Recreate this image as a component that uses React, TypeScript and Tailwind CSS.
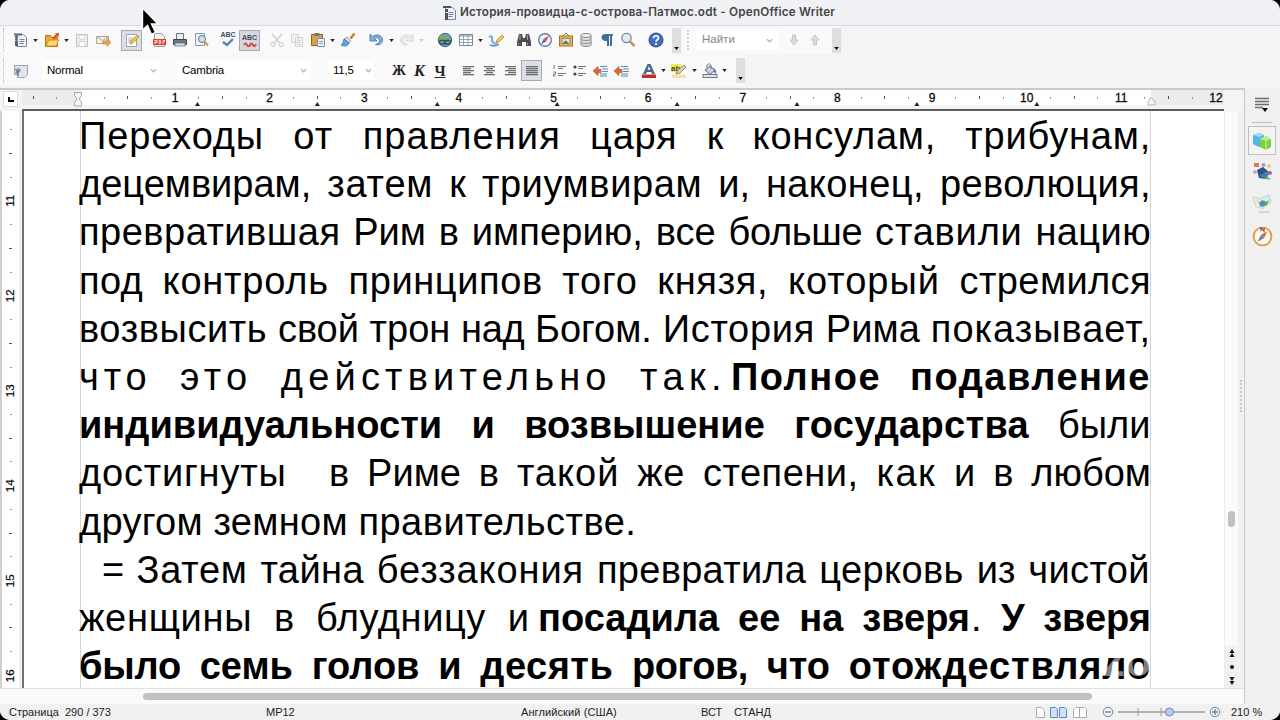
import type { ReactNode } from 'react';

// spacing: letter spacing of each word in px
type Part = { text: string; spacing: number[]; bold?: boolean; className?: string };

const LINES: Part[][] = [
  [{ text: 'Переходы от правления царя к консулам, трибунам,', spacing: [0.85, 1.2, 1.1, 0.8, 0, 0.8, 0.8] }],
  [{ text: 'децемвирам, затем к триумвирам и, наконец, революция,', spacing: [0, 0.8, 0, 0.6, 0, 0.4, 0.4] }],
  [{ text: 'превратившая Рим в империю, все больше ставили нацию', spacing: [0.5, 0, 0, 0.1, 0, -0.3, 0.8, 0.4] }],
  [{ text: 'под контроль принципов того князя, который стремился', spacing: [0.3, 0.8, 0.6, 0.8, 0.7, 1, 0.4] }],
  [{ text: 'возвысить свой трон над Богом. История Рима показывает,', spacing: [0.6, -0.1, 0, -0.4, 0, 0.7, 0.1, 1] }],
  [
    { text: 'что это действительно так.', spacing: [4.9, 5.2, 5.2, 5.4], className: 'w-[648px]' },
    { text: 'Полное подавление', spacing: [1.5, 1.5], bold: true, className: 'w-[420px]' },
  ],
  [
    { text: 'индивидуальности и возвышение государства', spacing: [0, 0, 0, 0.3], bold: true, className: 'w-[950px]' },
    { text: 'были', spacing: [0], className: 'w-[93px]' },
  ],
  [
    { text: 'достигнуты', spacing: [0.8], className: 'w-[207px]' },
    { text: 'в Риме в такой же степени, как и в любом', spacing: [0, 0, 0, 1, 0.6, 0.5, 1.5, 0, 0, 0], className: 'w-[822px]' },
  ],
  [{ text: 'другом земном правительстве.', spacing: [0.3, 0.3, 0.5], className: 'w-[556px]' }],
  [{ text: '= Затем тайна беззакония превратила церковь из чистой', spacing: [-0.5, 0.7, 0.4, 0.9, 0.3, 0.4, 0, 0.4], className: 'ml-[23px] w-[1048px]' }],
  [
    { text: 'женщины в блудницу и', spacing: [0.7, 0, 0.6, 0], className: 'w-[450px]' },
    { text: 'посадила ее на зверя', spacing: [0, 0, 0, 0], bold: true, className: 'ml-[9px] w-[432px]' },
    { text: '.', spacing: [0], className: 'ml-px w-[11px]' },
    { text: 'У зверя', spacing: [0, 0], bold: true, className: 'ml-auto w-[150px]' },
  ],
  [{ text: 'было семь голов и десять рогов, что отождествляло', spacing: [-0.2, 0, 0, 0, 0.5, -0.5, 0, 0.9], bold: true }],
];

function Icon({ children, className = '' }: { children: ReactNode; className?: string }) {
  return (
    <svg viewBox="0 0 16 16" className={`h-4 w-4 shrink-0 ${className}`} fill="none">
      {children}
    </svg>
  );
}

function Drop({ className = '' }: { className?: string }) {
  return (
    <svg viewBox="0 0 6 4" className={`h-[3px] w-[5px] shrink-0 ${className}`}>
      <path d="M0 0h6L3 4z" fill="#222" />
    </svg>
  );
}

function Chevron() {
  return (
    <svg viewBox="0 0 8 5" className="h-[5px] w-[7px]" fill="none">
      <path d="M1 1l3 3 3-3" stroke="#b5b5b5" strokeWidth="1.5" />
    </svg>
  );
}

function Overflow({ className = '' }: { className?: string }) {
  return (
    <div className={`flex h-[25px] w-[9px] shrink-0 items-end justify-center bg-[#dedede] pb-[3px] ${className}`}>
      <svg viewBox="0 0 6 4" className="h-[3px] w-[5px]"><path d="M0 0h6L3 4z" fill="#000" /></svg>
    </div>
  );
}

function Align({ rows }: { rows: [number, number][] }) {
  return (
    <Icon>
      {rows.map(([x, w], i) => (
        <rect key={i} x={x} y={3 + i * 2} width={w} height="1.3" fill="#6e6e6e" />
      ))}
    </Icon>
  );
}

function Page() {
  return (
    <g>
      <path d="M3.5 2.5h7l3 3v9h-10z" fill="#eef2f7" stroke="#7a8999" />
      <path d="M6.500 7.500h5M6.500 9.500h5M6.500 11.500h4" stroke="#6f87a3" />
    </g>
  );
}

function MainBar() {
  return (
    <div className="flex h-[28px] items-center">
      <div className="flex h-[28px] w-[681px] items-center rounded-sm bg-[#f9f9f9]">
        <div className="ml-[3px] h-6 w-[2px] border-l border-dotted border-[#b5b5b5]" />
        <Icon className="ml-[8px]">
          <Page />
          <path d="M1 1.500h8v2H1zM2 4h3v2H2zM2 6.500h3v2H2zM2 9h3v5H2z" fill="#55677b" />
        </Icon>
        <Drop className="ml-[4px]" />
        <Icon className="ml-[6px]">
          <path d="M1.500 3.500h5l1 2h6v9h-12z" fill="#f0a73a" stroke="#b8741c" />
          <path d="M2 14l3-6h10l-3 6z" fill="#ffd66b" stroke="#c58a25" strokeWidth=".8" />
          <path d="M8 6l4-4-1-1h4v4l-1-1-4 4z" fill="#e4572b" />
        </Icon>
        <Drop className="ml-[4px]" />
        <Icon className="ml-[5px]">
          <path d="M2.500 2.500h11v12h-11z" fill="#eee" stroke="#c2c2c2" />
          <path d="M5 3h6v4H5zM5 9.500h6v5H5z" fill="#fff" stroke="#cfcfcf" />
        </Icon>
        <Icon className="ml-[5px]">
          <path d="M1.500 4.500h12v7h-12z" fill="#f4f1e8" stroke="#a9a398" />
          <path d="M1.500 4.500l6 4 6-4" stroke="#a9a398" />
          <path d="M8 9h4V6.500l4 4-4 4V12H8z" fill="#e9a45a" stroke="#b77834" strokeWidth=".6" />
        </Icon>
        <div className="ml-[10px] flex h-[21px] w-[21px] items-center justify-center border border-[#a6a9b3] bg-[#dcdee6]">
          <Icon>
            <path d="M2.500 2.500h10v12h-10z" fill="#fff" stroke="#9ba7b5" />
            <path d="M4 6h5M4 8h4M4 10h3" stroke="#a5b2c4" />
            <path d="M6 12l1-3 6-6 2 2-6 6z" fill="#f4c63f" stroke="#a87b22" strokeWidth=".7" />
          </Icon>
        </div>
        <Icon className="ml-[9px]">
          <path d="M3.500 1.500h7l3 3v10h-10z" fill="#f6f6f6" stroke="#9a9a9a" />
          <path d="M2 7h13v6H2z" fill="#df4036" />
          <path d="M4 12V8.500h2v2H4M8 8.500v3h1.500v-3zM12 12V8.500h2M12 10h1.500" stroke="#fff" strokeWidth=".8" />
        </Icon>
        <Icon className="ml-[5px]">
          <path d="M4.500 1.500h7v6h-7z" fill="#e8f0f8" stroke="#65758a" />
          <path d="M1.500 7.500h13v5h-13z" fill="#6e7883" stroke="#3f4852" />
          <path d="M3 11h10v3H3z" fill="#d9dde2" stroke="#59636e" strokeWidth=".7" />
        </Icon>
        <Icon className="ml-[5px]">
          <path d="M2.500 1.500h9v12h-9z" fill="#eef3f8" stroke="#8a98a8" />
          <circle cx="9" cy="7" r="3.500" fill="#cfe4f5" stroke="#6b7580" />
          <path d="M11.500 9.500l3.500 4" stroke="#c99b4b" strokeWidth="2" />
        </Icon>
        <div className="ml-[11px] flex h-[18px] w-4 flex-col items-center">
          <span className="text-[7px] leading-[7px] font-bold text-[#3f4d5e]">ABC</span>
          <svg viewBox="0 0 12 9" className="h-[9px] w-3"><path d="M1 4l4 3 6-6" fill="none" stroke="#4a80c4" strokeWidth="2.400" /></svg>
        </div>
        <div className="ml-[3px] flex h-[21px] w-[21px] flex-col items-center border border-[#a6a9b3] bg-[#d5d7df] pt-[3px]">
          <span className="text-[7px] leading-[7px] font-bold text-[#3f4d5e]">ABC</span>
          <svg viewBox="0 0 14 5" className="mt-px h-[5px] w-[14px]"><path d="M1 3q1.500-3 3 0t3 0 3 0 3-1" fill="none" stroke="#d6473a" strokeWidth="1.800" /></svg>
        </div>
        <Icon className="ml-[9px]">
          <path d="M3 2l8 9M13 2l-8 9" stroke="#cfcfcf" strokeWidth="1.600" />
          <circle cx="4" cy="12.500" r="2" stroke="#d5d5d5" strokeWidth="1.300" />
          <circle cx="12" cy="12.500" r="2" stroke="#d5d5d5" strokeWidth="1.300" />
        </Icon>
        <Icon className="ml-[4px]">
          <path d="M2.500 2.500h7v8h-7zM6.500 5.500h7v9h-7z" fill="#f2f2f2" stroke="#d2d2d2" />
          <path d="M8 8.500h4M8 10.500h4M8 12.500h4" stroke="#d8d8d8" />
        </Icon>
        <Icon className="ml-[5px]">
          <path d="M1.500 2.500h11v11h-11z" fill="#d9a440" stroke="#8c6522" />
          <path d="M4.500 1h5v3h-5z" fill="#77777a" />
          <path d="M7.500 6.500h7v8h-7z" fill="#e6eef7" stroke="#7e91a8" />
          <path d="M9 9.500h4M9 11.500h4" stroke="#8fa4bd" />
        </Icon>
        <Drop className="ml-[4px]" />
        <Icon className="ml-[5px]">
          <path d="M14.500 1.500l-4 5" stroke="#b98346" strokeWidth="2.400" />
          <path d="M7 5l4 4-2 2-5-4z" fill="#d6dee8" stroke="#7185a0" strokeWidth=".7" />
          <path d="M4 7l5 4c-1 3-4 4-8 2 2-1 2-3 3-6z" fill="#6ba4dc" stroke="#3a6ea8" strokeWidth=".8" />
        </Icon>
        <Icon className="ml-[12px]">
          <path d="M2 2v7h7L6.500 6.500C9 5 12 6 11.500 9c-.3 2-2 3-4 3.500 4 1 7-1 7-4.500C14.500 3 8 1.500 4.500 4.500z" fill="#7fb0de" stroke="#3e6fa6" strokeWidth=".8" />
        </Icon>
        <Drop className="ml-[5px]" />
        <Icon className="ml-[5px]">
          <path d="M14 2v7H7l2.500-2.500C7 5 4 6 4.500 9c.3 2 2 3 4 3.500-4 1-7-1-7-4.500C1.500 3 8 1.500 11.500 4.500z" fill="#eaeaea" stroke="#d3d3d3" strokeWidth=".8" />
        </Icon>
        <Drop className="ml-[4px] opacity-20" />
        <Icon className="ml-[13px]">
          <circle cx="8" cy="8" r="6.700" fill="#6d9dc8" stroke="#49657e" />
          <path d="M3 4q4-3 5 0t4 0q2 3 1 5H3q-2-2 0-5z" fill="#77ad52" />
          <rect x="2.500" y="8.500" width="6" height="3.500" rx="1.700" stroke="#3b4b57" strokeWidth="1.300" />
          <rect x="7.500" y="8.500" width="6" height="3.500" rx="1.700" stroke="#3b4b57" strokeWidth="1.300" />
        </Icon>
        <Icon className="ml-[5px]">
          <path d="M1.500 2.500h13v11h-13z" fill="#fff" stroke="#7c8896" />
          <path d="M2 3h12v2H2z" fill="#b6c3d2" />
          <path d="M5.500 3v10M10 3v10M2 7.500h12M2 10.500h12" stroke="#97a5b5" />
        </Icon>
        <Drop className="ml-[4px]" />
        <Icon className="ml-[5px]">
          <path d="M1 5q4-2 3 2t5 5" stroke="#77a9de" strokeWidth="2" />
          <path d="M2 13q6 2 9-1" stroke="#5b8ec5" strokeWidth="1.500" />
          <path d="M8 11l1-3 5-5 2 2-5 5z" fill="#f2cb55" stroke="#a6792d" strokeWidth=".7" />
        </Icon>
        <Icon className="ml-[12px]">
          <path d="M3 2h3l1 4h2l1-4h3l2 8v4h-5v-4H6v4H1v-4z" fill="#4a4d52" />
          <path d="M4 3v5M11.500 3v5M2.500 11v2M11.500 11v2" stroke="#9b9fa6" />
        </Icon>
        <Icon className="ml-[5px]">
          <circle cx="8" cy="8" r="6.300" fill="#f2f6fb" stroke="#6b7f9c" strokeWidth="1.400" />
          <path d="M12 3.500L9.300 9.300 6.700 6.700z" fill="#d84a3a" />
          <path d="M4 12.500l2.700-5.800 2.600 2.600z" fill="#3f6fb8" />
        </Icon>
        <Icon className="ml-[5px]">
          <path d="M5 4l3-3 3 3" stroke="#8d6d39" />
          <rect x="1.500" y="4" width="13" height="10" fill="#e8b052" stroke="#a8731f" />
          <rect x="4" y="6.500" width="8" height="5" fill="#cfe3ee" stroke="#8b6a36" strokeWidth=".6" />
          <path d="M4.500 11.500l3-3 4 3z" fill="#4b7c5c" />
        </Icon>
        <Icon className="ml-[4px]">
          <path d="M3 3.500v9c0 2.500 10 2.500 10 0v-9" fill="#dcdcdc" stroke="#828282" />
          <ellipse cx="8" cy="3.500" rx="5" ry="2" fill="#f4f4f4" stroke="#828282" />
          <path d="M3 7c0 2 10 2 10 0M3 10c0 2 10 2 10 0" stroke="#8f8f8f" />
        </Icon>
        <Icon className="ml-[5px]">
          <path d="M6.500 2H14v1.800h-1V14h-2V3.800h-1V14H8V9C1 9.500 1 2 6.500 2z" fill="#456c9a" />
        </Icon>
        <Icon className="ml-[5px]">
          <circle cx="6.500" cy="6" r="4.600" fill="#dcecf8" stroke="#7a828c" strokeWidth="1.300" />
          <path d="M10 9.500l4.500 4.500" stroke="#b9903f" strokeWidth="2.400" />
        </Icon>
        <Icon className="ml-[12px]">
          <circle cx="8" cy="8" r="7" fill="#3f6bc0" stroke="#2b4c93" />
          <path d="M5.500 6.300c0-3.300 5-3.300 5-.4 0 1.800-2.500 1.900-2.500 3.800M8 11v1.900" stroke="#fff" strokeWidth="1.700" />
        </Icon>
        <Overflow className="ml-auto" />
      </div>
      <div className="flex h-[28px] w-[160px] items-center rounded-sm bg-[#f9f9f9] pl-[6px]">
        <div className="h-5 w-[2px] border-l-2 border-dotted border-[#d0d0d0]" />
        <div className="ml-[7px] flex h-[20px] w-[83px] items-center justify-between bg-white px-[6px]">
          <span className="text-[11.5px] text-[#858585]">Найти</span>
          <Chevron />
        </div>
        <Icon className="ml-[7px]">
          <path d="M6.500 3h3v5H12l-4 5-4-5h2.500z" fill="#dcdcdc" stroke="#c6c6c6" />
        </Icon>
        <Icon className="ml-[5px]">
          <path d="M6.500 13h3V8H12L8 3 4 8h2.500z" fill="#dcdcdc" stroke="#c6c6c6" />
        </Icon>
        <Overflow className="ml-auto" />
      </div>
    </div>
  );
}

function FormatBar() {
  return (
    <div className="mt-px mb-[2px] flex h-[31px] w-[745px] items-center bg-[#f9f9f9]">
      <div className="ml-[3px] h-6 w-[2px] border-l border-dotted border-[#b5b5b5]" />
      <Icon className="ml-[8px]">
        <path d="M1.500 2.500h13v9l-3 3h-7v-3h-3z" fill="#dfe5ec" stroke="#9aa5b2" />
        <path d="M2.500 10h2M5 5v8M2.500 6l2.500 4 2.500-4" stroke="#5d6f82" strokeWidth="1.200" />
      </Icon>
      <div className="ml-[13px] flex h-[19px] w-[118px] items-center justify-between bg-white pr-[3px] pl-[5px]">
        <span className="text-[11.5px] tracking-[-0.2px]">Normal</span>
        <Chevron />
      </div>
      <div className="ml-[17px] flex h-[19px] w-[134px] items-center justify-between bg-white pr-[4px] pl-[5px]">
        <span className="text-[11.5px] tracking-[-0.2px]">Cambria</span>
        <Chevron />
      </div>
      <div className="ml-[17px] flex h-[19px] w-[46px] items-center justify-between bg-white pr-[2px] pl-[5px]">
        <span className="text-[11.5px] tracking-[-0.2px]">11,5</span>
        <Chevron />
      </div>
      <div className="ml-[15px] flex font-['Liberation_Serif'] text-[16px] leading-4 font-bold text-[#222]">
        <span className="w-[20px] text-center text-[14px]">Ж</span>
        <span className="w-[21px] text-center italic">К</span>
        <span className="w-[20px] text-center text-[15px] underline">Ч</span>
      </div>
      <div className="ml-[11px] flex gap-[5px]">
        <Align rows={[[2, 11], [2, 8], [2, 11], [2, 8], [2, 11]]} />
        <Align rows={[[2, 11], [4, 7], [2, 11], [4, 7], [2, 11]]} />
        <Align rows={[[2, 11], [5, 8], [2, 11], [5, 8], [2, 11]]} />
      </div>
      <div className="ml-[2px] flex h-[21px] w-[21px] items-center justify-center border border-[#a6a9b3] bg-[#dcdee6]">
        <Align rows={[[2, 12], [2, 12], [2, 12], [2, 12], [2, 12]]} />
      </div>
      <Icon className="ml-[10px]">
        <path d="M2 2v4M1.500 9h2v2h-2v2h2" stroke="#777" />
        <path d="M6 3.500h8M6 5.500h5M6 10.500h8M6 12.500h5" stroke="#777" />
      </Icon>
      <Icon className="ml-[4px]">
        <circle cx="3" cy="4" r="1.600" fill="#444" />
        <circle cx="3" cy="11" r="1.600" fill="#444" />
        <path d="M6 3.500h8M6 5.500h5M6 10.500h8M6 12.500h5" stroke="#777" />
      </Icon>
      {[0, 1].map(i => (
        <Icon key={i} className="ml-[5px]">
          <path d="M0 8l5-4.500v3h3v3H5v3z" fill="#e2683a" stroke="#a5452a" strokeWidth=".6" />
          <path d="M7 3.500h7M9 6h6M9 8.500h6M7 11h7M7 13h7" stroke="#568dbb" strokeWidth="1.200" />
        </Icon>
      ))}
      <Icon className="ml-[11px]">
        <path d="M2 11L6.500 1h3L14 11h-3l-.8-2H5.800L5 11zM6.600 6.700h2.800L8 3z" fill="#4b6788" />
        <rect x="1" y="11.500" width="14" height="3.500" fill="#c22b2b" />
      </Icon>
      <Drop className="ml-[4px]" />
      <Icon className="ml-[5px]">
        <rect x="0" y="1" width="10" height="8" fill="#f5e94b" />
        <text x="0" y="8" fontSize="8" fontWeight="700" fill="#444">ab</text>
        <path d="M5 11l1-3 7-6 2 2-6 6z" fill="#d9d3b0" stroke="#7e765a" strokeWidth=".8" />
        <rect x="1" y="11.500" width="14" height="3.500" fill="#fbdcb6" />
      </Icon>
      <Drop className="ml-[5px]" />
      <Icon className="ml-[5px]">
        <path d="M3 7l5-4 5 4-5 4.500z" fill="#c7d0dc" stroke="#566a84" />
        <path d="M5 5V2.500C5 .5 9 .5 9 2.500V6" stroke="#66758a" />
        <path d="M11 5q4 1 3 6l-2-2z" fill="#5c7fa8" />
        <rect x="1" y="11.500" width="14" height="3" fill="#e6e6e6" stroke="#555d69" strokeWidth=".8" />
      </Icon>
      <Drop className="ml-[4px]" />
      <Overflow className="ml-auto" />
    </div>
  );
}

function Tick({ index, major, vertical = false }: { index: number; major: number; vertical?: boolean }) {
  if (index % 4 === major) return null;
  const half = index % 4 === (major + 2) % 4;
  if (vertical) return <i className={`h-px bg-[#555] ${half ? 'w-[3px]' : 'w-[2px] opacity-60'}`} />;
  return <i className={`w-px bg-[#555] ${half ? 'h-[3px]' : 'h-[2px] opacity-60'}`} />;
}

function TopRuler() {
  return (
    <div className="flex h-[23px] w-full border-t-2 border-[#c9c9c9] bg-[#f4f4f4]">
      <div className="mt-px ml-[3px] flex h-[16px] w-[15px] shrink-0 items-center justify-center border border-[#ddd] bg-white">
        <i className="h-[5px] w-[6px] border-b-2 border-l-2 border-black" />
      </div>
      <div className="relative ml-[4px] h-full w-[1202px] shrink-0 border-b-2 border-[#5c5c5c]">
        <div className="flex h-[15px] bg-[linear-gradient(to_right,#ececec_59px,#fff_59px,#fff_1129px,#ececec_1129px)]">
          {Array.from({ length: 51 }, (_, k) => (
            <div key={k} className="flex h-full w-[23.66px] shrink-0 items-center justify-center pr-[1.400px]">
              {k % 4 === 2 && k > 2 && <span className="text-[12px] leading-none whitespace-nowrap [-webkit-text-stroke:0.3px_#111]">{(k - 2) / 4}</span>}
              <Tick index={k} major={2} />
            </div>
          ))}
        </div>
        <svg viewBox="0 0 1203 21" className="absolute top-0 left-0 h-[21px] w-[1203px]">
          <path d="M52.500 2.500h7v3l-2.500 3.500 2.500 3.500v3.500h-7v-3.500l2.500-3.500-2.500-3.500z" fill="#f5f5f5" stroke="#a8a8a8" />
          <path d="M1129 7l4 5v3h-7v-3z" fill="#f5f5f5" stroke="#b5b5b5" />
          {Array.from({ length: 8 }, (_, i) => (
            <path key={i} d={`M${175.5 + i * 119.9 - 2.5} 16h5l-2.500-4z`} fill="#222" />
          ))}
        </svg>
      </div>
    </div>
  );
}

function SideRuler() {
  return (
    <div className="flex w-[24px] shrink-0 flex-col overflow-hidden border-r-2 border-l-2 border-[#707070] border-l-[#cfcfcf] bg-[#f1f1f1]">
      <div className="w-[17px] flex-1 bg-white pt-[7px]">
        {Array.from({ length: 24 }, (_, k) => (
          <div key={k} className="flex h-[23.73px] items-center justify-center">
            {k % 4 === 3 && <span className="-rotate-90 text-[11.5px] leading-none [-webkit-text-stroke:0.2px_#111]">{(k - 3) / 4 + 11}</span>}
            <Tick index={k} major={3} vertical />
          </div>
        ))}
      </div>
    </div>
  );
}

function Sidebar() {
  return (
    <aside className="flex w-[36px] shrink-0 flex-col items-center border-l border-[#c8c8c8] bg-[#f0f0f0] pr-px">
      <svg viewBox="0 0 16 16" className="mt-[9px] h-4 w-4">
        <path d="M1 1.500h14M1 4.500h14M1 7.500h14M1 10.500h8" stroke="#6c6c6c" strokeWidth="1.300" />
        <path d="M8 11h6l-3 4z" fill="#000" />
      </svg>
      <div className="mt-[9px] h-px w-[20px] bg-[#bdbdbd]" />
      <div className="mt-[3px] flex h-[29px] w-[28px] items-center justify-center border border-[#bfbfbf] bg-[#f3f3f3]">
        <svg viewBox="0 0 20 20" className="h-5 w-5">
          <path d="M1 4l6-2 5 2v10l-5 2-6-3z" fill="#55b5e5" />
          <path d="M1 4l6 2 5-2-5-2z" fill="#a0daf5" />
          <path d="M8 8l6-3 5 3v8l-5 3-6-3z" fill="#78cf3f" />
          <path d="M8 8l6 2 5-2-5-3z" fill="#c2ee91" />
          <path d="M14 10v9" stroke="#e5f5a6" />
        </svg>
      </div>
      <svg viewBox="0 0 20 20" className="mt-[7px] h-5 w-5">
        <path d="M5 8l6-3 6 5-3 7-7-1z" fill="#28547f" />
        <path d="M7 14l8-5 2 3-3 5z" fill="#477fae" />
        <rect x="2" y="1" width="5" height="4" fill="#dc8137" />
        <circle cx="11.500" cy="3" r="2" fill="#b98be1" />
        <circle cx="17" cy="4" r="2" fill="#edce66" />
        <circle cx="3" cy="10" r="2" fill="#d39ae3" />
        <circle cx="18" cy="11" r="2" fill="#be5c80" />
        <path d="M15 14l4 3-4 1z" fill="#85b955" />
      </svg>
      <svg viewBox="0 0 20 20" className="mt-[12px] h-5 w-5">
        <path d="M1 3l6 1 1 10-4-1z" fill="#e6f1dd" stroke="#b7d5a4" strokeWidth=".7" />
        <path d="M5 6l12-5 2 7-9 7z" fill="#d8ecf8" stroke="#abc9d9" strokeWidth=".7" />
        <path d="M7 9q3-5 7-1l3-2-2 5-5 2z" fill="#66a545" />
        <circle cx="10" cy="10" r="2.500" fill="#4f8fc4" />
        <path d="M7 18h11" stroke="#b9b9b9" />
      </svg>
      <svg viewBox="0 0 20 20" className="mt-[12px] h-[21px] w-[21px]">
        <circle cx="10" cy="10" r="8.500" fill="#fff7e8" stroke="#df9c4a" strokeWidth="1.800" />
        <path d="M8.500 5V1.500l3 3.500V1.500" fill="none" stroke="#555" />
        <path d="M14.500 5l-3 6.500L8.500 8.500z" fill="#d9673c" />
        <path d="M5.500 15l3-6.500 3 3z" fill="#5684bd" />
      </svg>
    </aside>
  );
}

function StatusBar() {
  return (
    <footer className="flex h-[16px] items-center bg-[#f1f1f1] text-[11px] whitespace-pre text-[#222]">
      <span className="ml-[9px] w-[257px]">Страница  290 / 373</span>
      <span className="w-[255px]">МР12</span>
      <span className="w-[180px] tracking-[0.1px]">Английский (США)</span>
      <span className="w-[33px]">ВСТ</span>
      <span className="w-[302px] tracking-[0.1px]">СТАНД</span>
      <svg viewBox="0 0 52 12" className="h-3 w-[52px]" fill="#fff" stroke="#aaa">
        <path d="M.5 1.500h5l3 3v7h-8z" />
        <path d="M14.500 1.500h5l2 2v8h-7zM23.500 1.500h5l2 2v8h-7z" fill="#cfe0fa" stroke="#5f88c5" />
        <path d="M37.500 3.500l2-2h4v10h-6zM43.500 1.500h5l2 2v8h-7z" />
      </svg>
      <svg viewBox="0 0 120 12" className="ml-[14px] h-3 w-[120px]" fill="none" stroke="#7184ac">
        <circle cx="6" cy="6" r="4.700" />
        <path d="M3 6h6M110 6h6M113 3v6" strokeWidth="1.300" />
        <path d="M16 6h87" stroke="#999" strokeWidth="1.500" />
        <path d="M36 2v8M59 2v8" stroke="#999" />
        <circle cx="67.500" cy="6" r="4" fill="#bccaf2" />
        <circle cx="113" cy="6" r="4.700" />
      </svg>
      <span className="ml-[9px]">210 %</span>
    </footer>
  );
}

function TextRun({ part }: { part: Part }) {
  return (
    <span className={`block [text-align-last:justify] ${part.bold ? 'font-bold' : ''} ${part.className ?? 'w-full'}`}>
      {part.text.split(' ').map((word, i) => (
        <span key={i}>
          {i > 0 && ' '}
          <span style={{ letterSpacing: part.spacing[i] }}>{word}</span>
        </span>
      ))}
    </span>
  );
}

export default function App() {
  return (
    <div className="h-[720px] w-[1280px] overflow-hidden bg-black font-['Liberation_Sans',sans-serif] text-black">
      <div className="relative flex h-full flex-col overflow-hidden rounded-[10px] bg-[#f4f4f4]">
        <header className="flex h-[26px] shrink-0 items-center border-b border-[#dadbdd] bg-[#eff1f5] pl-[442px]">
          <Icon>
            <Page />
            <path d="M1 1h8v2H1zM3 4h3v3H3zM3 8h3v7H3z" fill="#4d5358" />
          </Icon>
          <h1 className="ml-[2px] font-['Inter'] text-[11.7px] font-semibold tracking-[0.2px] whitespace-nowrap text-[#444]">
            История-провидца-с-острова-Патмос.odt - OpenOffice Writer
          </h1>
        </header>
        <MainBar />
        <FormatBar />
        <div className="flex h-[616px] shrink-0">
          <div className="flex w-[1244px] shrink-0 flex-col">
            <TopRuler />
            <div className="flex h-[577px] shrink-0">
              <SideRuler />
              <main className="relative w-[1200px] shrink-0 overflow-hidden bg-white">
                <div className="ml-[56px] w-[1071px] border-x border-[#d4d4d4]">
                  {LINES.map((line, i) => (
                    <p
                      key={i}
                      className={`-ml-[2px] flex h-[48.200px] w-[1072px] text-[38px] leading-[50px] whitespace-nowrap ${line.length === 2 ? 'justify-between' : ''}`}
                    >
                      {line.map((part, j) => (
                        <TextRun key={j} part={part} />
                      ))}
                    </p>
                  ))}
                </div>
                {/* watermark */}
                <div className="absolute right-[6px] bottom-[1px] font-['Inter'] text-[44px] leading-[54px] font-semibold text-white/50">zoom</div>
              </main>
              <div className="flex w-[14px] flex-col items-center border-l border-[#ececec] bg-[#fafafa]">
                <div className="mt-[400px] h-[16px] w-[7px] rounded-full bg-[#c1c1c1]" />
                <svg viewBox="0 0 14 42" className="mt-auto h-[42px] w-[14px] bg-[#f0f0f0]">
                  <path d="M4.500 7L7 3l2.500 4zM4.500 11L7 7l2.500 4zM4.500 31h5L7 35zM4.500 35h5L7 39z" fill="#111" />
                  <circle cx="7" cy="21" r="2" fill="#111" />
                </svg>
              </div>
              <div className="flex w-[6px] items-center bg-[#f1f1f1]">
                <div className="-mt-[8px] ml-[2px] h-[32px] border-l-2 border-dotted border-[#c8c8c8]" />
              </div>
            </div>
            <div className="flex h-[16px] items-center border-t border-[#e2e2e2] bg-[#fafafa]">
              <div className="ml-[143px] h-[7px] w-[949px] rounded-full bg-[#c1c1c1]" />
            </div>
          </div>
          <Sidebar />
        </div>
        <StatusBar />
      </div>
      {/* mouse pointer */}
      <svg viewBox="0 0 18 30" className="absolute top-[6px] left-[141px] h-[30px] w-[18px]">
        <path d="M1.500 2v22l5-4.500 4 9 4-2-4-8.500h6.500z" fill="#000" stroke="#fff" strokeWidth="1.400" />
      </svg>
    </div>
  );
}
